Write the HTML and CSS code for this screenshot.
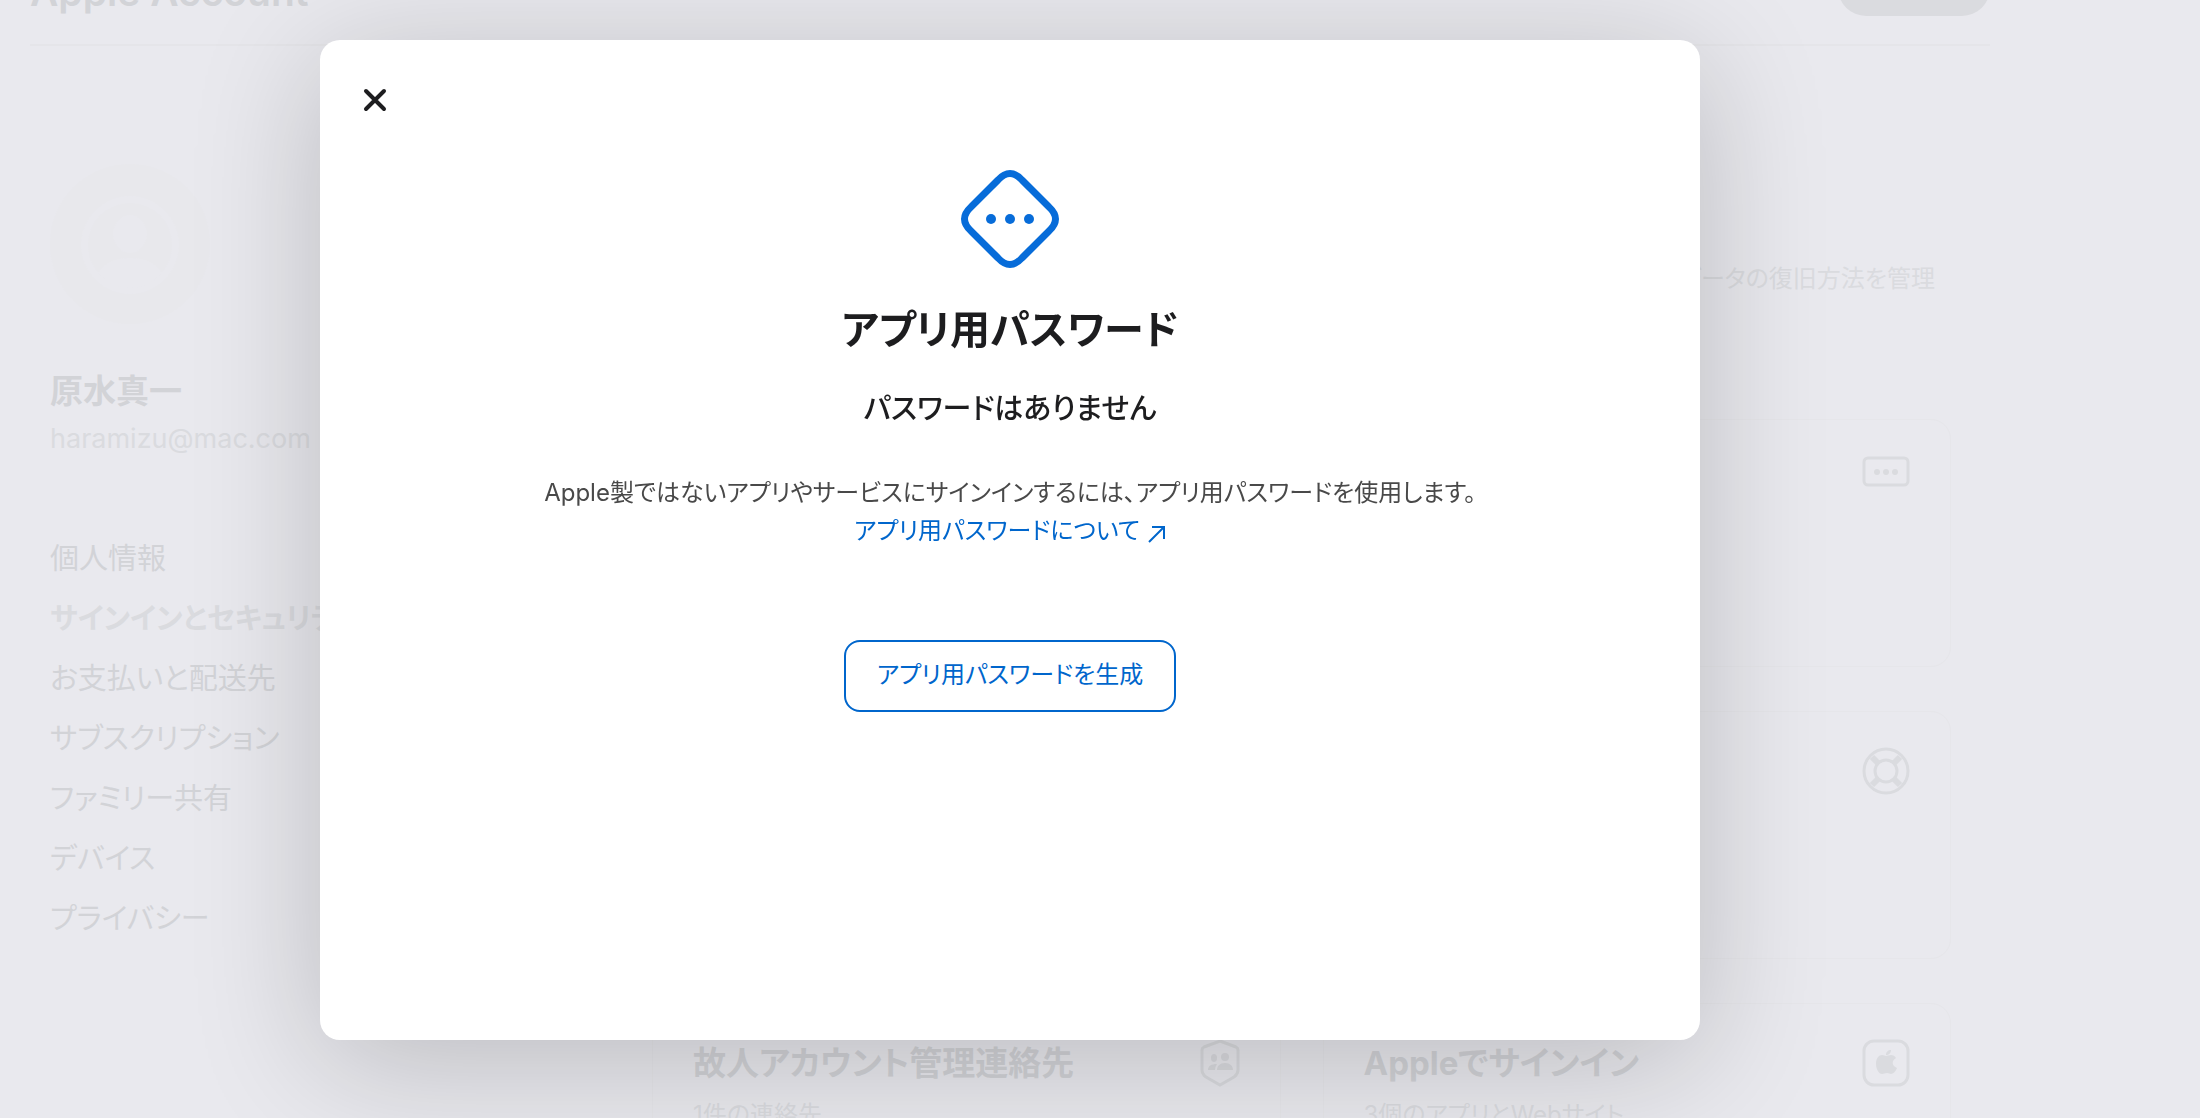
FILE: index.html
```
<!DOCTYPE html>
<html lang="ja">
<head>
  <meta charset="UTF-8" />
  <meta name="viewport" content="width=device-width, initial-scale=1" />
  <title>Apple Account</title>
  <link rel="stylesheet" href="styles.css">
</head>
<body>
  <div class="page">
    <header class="page-header">
      <a class="brand" href="#">Apple Account</a>
      <button class="sign-out" type="button" aria-label="サインアウト"></button>
    </header>

    <div class="layout">
      <aside class="sidebar">
        <svg class="avatar" viewBox="0 0 160 160" aria-hidden="true">
          <circle class="avatar-dark" cx="80" cy="80" r="80" />
          <circle class="avatar-light" cx="80" cy="81" r="49" />
          <circle class="avatar-dark" cx="80" cy="81" r="42" />
          <ellipse class="avatar-light" cx="80" cy="70" rx="17" ry="19" />
          <path class="avatar-light" d="M48 109c5-10 18-15 32-15s27 5 32 15c-8 9-19 15-32 15s-24-6-32-15z" />
        </svg>
        <p class="user-name">原水真一</p>
        <p class="user-mail">haramizu@mac.com</p>
        <nav class="side-nav">
          <a href="#">個人情報</a>
          <a href="#" class="active">サインインとセキュリティ</a>
          <a href="#">お支払いと配送先</a>
          <a href="#">サブスクリプション</a>
          <a href="#">ファミリー共有</a>
          <a href="#">デバイス</a>
          <a href="#">プライバシー</a>
        </nav>
      </aside>

      <main class="content">
        <p class="intro">アカウントへのサインイン、セキュリティ、データの復旧方法を管理</p>
        <div class="cards">
          <section class="card"></section>
          <section class="card">
            <svg class="card-icon" viewBox="0 0 48 48" aria-hidden="true">
              <rect class="line" x="2" y="3" width="44" height="27" rx="4" />
              <circle class="fill" cx="15" cy="17" r="3" />
              <circle class="fill" cx="24" cy="17" r="3" />
              <circle class="fill" cx="33" cy="17" r="3" />
            </svg>
          </section>
          <section class="card"></section>
          <section class="card">
            <svg class="card-icon" viewBox="0 0 48 48" aria-hidden="true">
              <circle class="line" cx="24" cy="24" r="22" />
              <circle class="line" cx="24" cy="24" r="11" />
              <path class="spokes" d="M10 10l7 7M38 10l-7 7M10 38l7-7M38 38l-7-7" />
            </svg>
          </section>
          <section class="card">
            <div>
              <h3>故人アカウント管理連絡先</h3>
              <p>1件の連絡先</p>
            </div>
            <svg class="card-icon" viewBox="-4 0 48 48" aria-hidden="true">
              <path class="line" d="M24 2L40 8q2 1 2 3V31q0 4-4 7L24 46 10 38q-4-3-4-7V11q0-2 2-3z" />
              <ellipse class="fill" cx="18" cy="19" rx="3" ry="4" />
              <ellipse class="fill" cx="29" cy="18" rx="4" ry="4" />
              <path class="fill" d="M12 31c0-4 3-6 9-6q-2 3-2 6zM21 31c0-4 3-7 8-7s8 3 8 7z" />
            </svg>
          </section>
          <section class="card">
            <div>
              <h3>Appleでサインイン</h3>
              <p>3個のアプリとWebサイト</p>
            </div>
            <svg class="card-icon" viewBox="0 0 48 48" aria-hidden="true">
              <rect class="line" x="2" y="2" width="44" height="44" rx="10" />
              <path class="fill" d="M24 17c1 0 3-1 5-1 2 0 4 1 5 3-5 3-4 8 1 10-1 3-4 6-6 6-1 0-2-1-4-1s-3 1-5 1c-3 0-6-5-6-10 0-6 3-9 6-9 2 0 3 1 4 1zM29 11c0 3-2 5-5 5 0-3 2-5 5-5z" />
            </svg>
          </section>
        </div>
      </main>
    </div>
  </div>

  <div class="overlay">
    <div class="modal" role="dialog" aria-modal="true" aria-labelledby="modal-title">
      <button class="close" type="button" aria-label="閉じる">
        <svg viewBox="0 0 24 24" aria-hidden="true"><path d="M3 3l18 18M21 3L3 21" /></svg>
      </button>

      <div class="modal-body">
        <svg class="modal-icon" viewBox="0 0 98 98" aria-hidden="true">
          <path d="M37 10Q49-3 61 10L88 37Q101 49 88 61L61 88Q49 101 37 88L10 61Q-3 49 10 37Z" />
          <circle cx="30" cy="49" r="5" />
          <circle cx="49" cy="49" r="5" />
          <circle cx="68" cy="49" r="5" />
        </svg>
        <h1 id="modal-title">アプリ用パスワード</h1>
        <h2>パスワードはありません</h2>
        <p class="description">
          Apple製ではないアプリやサービスにサインインするには、アプリ用パスワードを使用します。<br>
          <a href="#">アプリ用パスワードについて<svg class="arrow" viewBox="0 0 18 18" aria-hidden="true"><path d="M1 17L16 2M4 2h12v12" /></svg></a>
        </p>
        <button class="generate" type="button">アプリ用パスワードを生成</button>
      </div>
    </div>
  </div>
</body>
</html>
```

FILE: styles.css
```
* {
  margin: 0;
  padding: 0;
  box-sizing: border-box;
}

:root {
  --bg: #e9e9ee;
  --faded: #d2d3d7;
  --fainter: #dadbdf;
  --hairline: #e5e5e9;
  --blue: #0066cc;
  --gutter: 180px;
}

body {
  height: 100vh;
  overflow: hidden;
  background-color: var(--bg);
  color: var(--faded);
  font-family: Inter, "Noto Sans CJK JP", sans-serif;
  font-feature-settings: "palt";
}

a {
  color: inherit;
  text-decoration: none;
}

button {
  font: inherit;
  font-feature-settings: inherit;
  cursor: pointer;
}

/* Page behind the dialog, scrolled down a little */
.page {
  margin: -56px calc(var(--gutter) + 30px) 0 30px;
}

.page-header {
  display: flex;
  justify-content: space-between;
  align-items: flex-end;
  padding: 16px 0 28px;
  border-bottom: 2px solid var(--hairline);
}

.brand {
  font-size: 39px;
  font-weight: 600;
  line-height: 48px;
}

.sign-out {
  width: 152px;
  height: 56px;
  border: none;
  border-radius: 28px;
  background-color: var(--fainter);
}

.layout {
  display: flex;
  justify-content: space-between;
  padding: 118px 39px 0 20px;
}

/* Sidebar */
.sidebar {
  width: 400px;
  white-space: nowrap;
}

.avatar {
  display: block;
  width: 160px;
  height: 160px;
  margin-bottom: 43px;
}

.avatar-dark {
  fill: #e8e8ec;
}

.avatar-light {
  fill: #e9e9ee;
}

.user-name {
  font-size: 33px;
  font-weight: 700;
  line-height: 48px;
}

.user-mail {
  margin: 4px 0 70px;
  color: var(--fainter);
  font-size: 27px;
  line-height: 40px;
}

.side-nav a {
  display: block;
  font-size: 29px;
  line-height: 60px;
}

.side-nav .active {
  color: var(--fainter);
  font-weight: 700;
}

/* Cards */
.content {
  flex: 0 1 1299px;
}

.intro {
  padding: 97px 16px 122px;
  color: var(--fainter);
  font-size: 24px;
  line-height: 36px;
  text-align: right;
}

.cards {
  display: grid;
  grid-template-columns: 1fr 1fr;
  gap: 44px 42px;
}

.card {
  display: flex;
  justify-content: space-between;
  align-items: flex-start;
  min-height: 248px;
  padding: 35px 40px;
  border: 1px solid #e6e6ea;
  border-radius: 20px;
}

.card h3 {
  margin-bottom: 12px;
  font-size: 33px;
  font-weight: 700;
  line-height: 48px;
}

.card p {
  color: var(--fainter);
  font-size: 24px;
  line-height: 32px;
}

.card-icon {
  width: 48px;
  height: 48px;
  margin-left: auto;
}

.card-icon .line {
  fill: none;
  stroke: var(--fainter);
  stroke-width: 3;
}

.card-icon .spokes {
  stroke: var(--fainter);
  stroke-width: 6;
}

.card-icon .fill {
  fill: var(--fainter);
}

/* Dialog */
.overlay {
  position: fixed;
  inset: 0;
  display: flex;
  justify-content: center;
  padding: 40px var(--gutter) 78px 0;
}

.modal {
  width: 100%;
  max-width: 1380px;
  padding: 40px 35px;
  border-radius: 20px;
  background-color: #ffffff;
  box-shadow: 0 22px 130px rgba(0, 0, 0, 0.2);
  color: #1d1d1f;
}

.close {
  display: flex;
  justify-content: center;
  align-items: center;
  width: 40px;
  height: 40px;
  border: none;
  background: none;
}

.close svg {
  width: 24px;
  height: 24px;
  fill: none;
  stroke: #1d1d1f;
  stroke-width: 4;
  stroke-linecap: round;
}

.modal-body {
  display: flex;
  flex-direction: column;
  align-items: center;
  padding-top: 50px;
  text-align: center;
}

.modal-icon {
  width: 98px;
  height: 98px;
  overflow: visible;
  fill: #076cd9;
}

.modal-icon path {
  fill: none;
  stroke: #076cd9;
  stroke-width: 7;
}

.modal h1 {
  margin-top: 34px;
  font-size: 40px;
  font-weight: 700;
  line-height: 56px;
}

.modal h2 {
  margin-top: 31px;
  font-size: 29px;
  font-weight: 500;
  line-height: 40px;
}

.description {
  margin-top: 45px;
  color: #494949;
  font-size: 24px;
  line-height: 38px;
}

.description a {
  color: var(--blue);
}

.arrow {
  width: 18px;
  height: 18px;
  margin-left: 8px;
  vertical-align: -4px;
  fill: none;
  stroke: var(--blue);
  stroke-width: 2;
}

.generate {
  margin-top: 90px;
  padding: 0 31px 2px;
  border: 2px solid var(--blue);
  border-radius: 16px;
  background-color: #ffffff;
  color: var(--blue);
  font-size: 24px;
  line-height: 66px;
}
```
